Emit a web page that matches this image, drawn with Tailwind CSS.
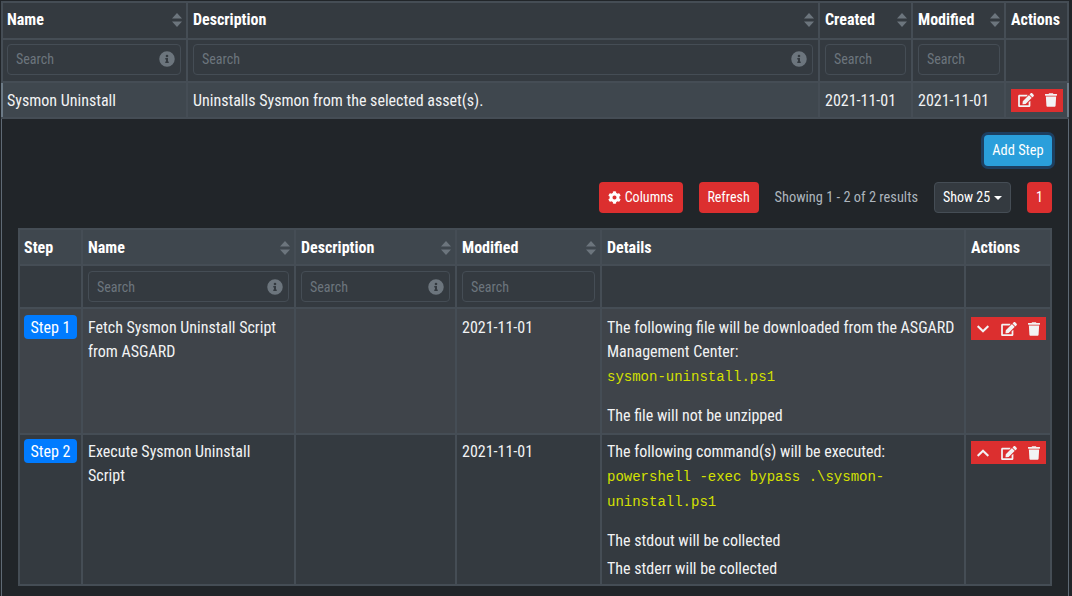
<!DOCTYPE html>
<html>
<head>
<meta charset="utf-8">
<script src="https://cdn.jsdelivr.net/npm/@tailwindcss/browser@4"></script>
</head>
<body class="bg-[#212529] overflow-hidden">
<svg class="hidden">
<symbol id="sort" viewBox="0 0 12 16"><path d="M1 6.500 6 1l5 5.500Z M1 9.500 6 15l5-5.500Z" fill="currentColor"/></symbol>
<symbol id="info" viewBox="0 0 512 512"><path fill="currentColor" d="M256 8a248 248 0 1 0 0 496 248 248 0 0 0 0-496zm0 110a42 42 0 1 1 0 84 42 42 0 0 1 0-84zm56 254c0 7-5 12-12 12h-88c-7 0-12-5-12-12v-24c0-7 5-12 12-12h12v-64h-12c-7 0-12-5-12-12v-24c0-7 5-12 12-12h64c7 0 12 5 12 12v100h12c7 0 12 5 12 12v24z"/></symbol>
<symbol id="edit" viewBox="0 0 576 512"><path fill="currentColor" d="M402.600 83.200l90.200 90.200c3.800 3.800 3.800 10 0 13.800L274.400 405.600l-92.800 10.300c-12.400 1.400-22.900-9.100-21.500-21.500l10.300-92.800L388.800 83.200c3.800-3.800 10-3.800 13.800 0zm162-22.900l-48.800-48.800c-15.200-15.200-39.900-15.200-55.200 0l-35.400 35.400c-3.800 3.800-3.800 10 0 13.800l90.200 90.200c3.800 3.800 10 3.800 13.800 0l35.400-35.400c15.200-15.300 15.200-40 0-55.200zM384 346.200V448H64V128h229.800c3.200 0 6.200-1.300 8.500-3.500l40-40c7.600-7.600 2.200-20.500-8.500-20.500H48C21.500 64 0 85.500 0 112v352c0 26.500 21.500 48 48 48h352c26.500 0 48-21.500 48-48V306.200c0-10.700-12.900-16-20.500-8.500l-40 40c-2.200 2.300-3.500 5.300-3.500 8.500z"/></symbol>
<symbol id="trash" viewBox="0 0 448 512"><path fill="currentColor" d="M432 32H312l-9-19c-4-8-12-13-21-13H166c-9 0-17 5-21 13l-9 19H16C7 32 0 39 0 48v32c0 9 7 16 16 16h416c9 0 16-7 16-16V48c0-9-7-16-16-16zM53 467c2 25 23 45 48 45h246c25 0 46-20 48-45l21-339H32l21 339z"/></symbol>
<symbol id="down" viewBox="0 0 448 512"><path fill="currentColor" d="M207 381 13 187c-9-9-9-24 0-34l23-22c9-10 24-10 34 0l154 153 154-153c10-10 25-10 34 0l23 22c9 10 9 25 0 34L241 381c-9 10-25 10-34 0z"/></symbol>
<symbol id="up" viewBox="0 0 448 512"><path fill="currentColor" d="M241 131l194 194c9 9 9 24 0 34l-23 22c-9 10-24 10-34 0L224 228 70 381c-10 10-25 10-34 0l-23-22c-9-10-9-25 0-34l194-194c9-10 25-10 34 0z"/></symbol>
<symbol id="gear" viewBox="0 0 512 512"><path fill="currentColor" d="m487 316-42-25a190 190 0 0 0 0-70l42-25c5-3 7-9 5-14-11-35-30-67-54-93-4-4-10-5-15-2l-42 24a190 190 0 0 0-61-35V28c0-6-4-10-9-11a222 222 0 0 0-110 0c-5 1-9 5-9 11v48a190 190 0 0 0-61 35L89 87c-5-3-11-2-15 2-24 26-43 58-54 93-2 5 0 11 5 14l42 25a190 190 0 0 0 0 70l-42 25c-5 3-7 9-5 14 11 35 30 67 54 93 4 4 10 5 15 2l42-24a190 190 0 0 0 61 35v48c0 6 4 10 9 11a222 222 0 0 0 110 0c5-1 9-5 9-11v-48a190 190 0 0 0 61-35l42 24c5 3 11 2 15-2 24-26 43-58 54-93 2-5 0-11-5-14zM256 336a80 80 0 1 1 0-160 80 80 0 0 1 0 160z"/></symbol>
</svg>
<div class="w-[1072px] h-[596px] overflow-hidden font-['Roboto',sans-serif] [font-stretch:75%] text-[16px] leading-[24px] text-white">
<div class="px-px pt-px">
<table class="table-fixed border-collapse w-[1068px] bg-[#343a40]">
<colgroup><col class="w-[185px]"><col class="w-[632px]"><col class="w-[93px]"><col class="w-[93px]"><col class="w-[63px]"></colgroup>
<thead>
<tr class="h-[37px]">
<th class="border-2 border-[#454d55] pl-1 pr-[5px] pb-[2px] text-left font-bold"><div class="flex items-center justify-between">Name<svg class="w-3 h-4 text-[#6c757d] mr-[-2px]"><use href="#sort"/></svg></div></th>
<th class="border-2 border-[#454d55] px-[5px] pb-[2px] text-left font-bold"><div class="flex items-center justify-between">Description<svg class="w-3 h-4 text-[#6c757d] mr-[-2px]"><use href="#sort"/></svg></div></th>
<th class="border-2 border-[#454d55] px-[5px] pb-[2px] text-left font-bold"><div class="flex items-center justify-between">Created<svg class="w-3 h-4 text-[#6c757d] mr-[-2px]"><use href="#sort"/></svg></div></th>
<th class="border-2 border-[#454d55] px-[5px] pb-[2px] text-left font-bold"><div class="flex items-center justify-between">Modified<svg class="w-3 h-4 text-[#6c757d] mr-[-2px]"><use href="#sort"/></svg></div></th>
<th class="border-2 border-[#454d55] px-[5px] pb-[2px] text-left font-bold">Actions</th>
</tr>
<tr class="h-[43px]">
<td class="border-2 border-[#454d55] pl-1 pr-[5px] pb-[3px]"><div class="h-[31px] border border-[#454d55] rounded px-2 flex items-center justify-between text-[14px] text-[#6c757d]">Search<svg class="w-4 h-4 mr-[-3px]"><use href="#info"/></svg></div></td>
<td class="border-2 border-[#454d55] px-[5px] pb-[3px]"><div class="h-[31px] border border-[#454d55] rounded px-2 flex items-center justify-between text-[14px] text-[#6c757d]">Search<svg class="w-4 h-4 mr-[-3px]"><use href="#info"/></svg></div></td>
<td class="border-2 border-[#454d55] px-[5px] pb-[3px]"><div class="h-[31px] border border-[#454d55] rounded px-2 flex items-center text-[14px] text-[#6c757d]">Search</div></td>
<td class="border-2 border-[#454d55] px-[5px] pb-[3px]"><div class="h-[31px] w-[82px] border border-[#454d55] rounded px-2 flex items-center text-[14px] text-[#6c757d]">Search</div></td>
<td class="border-2 border-[#454d55]"></td>
</tr>
</thead>
<tbody>
<tr class="h-[36px] bg-[#3f474e] text-[#f2f3f4]">
<td class="border-2 border-[#454d55] border-t-[#6c7a86] border-l-[#6c7a86] pl-1 pt-[2px]">Sysmon Uninstall</td>
<td class="border-2 border-[#454d55] border-t-[#6c7a86] px-[5px] pt-[2px]">Uninstalls Sysmon from the selected asset(s).</td>
<td class="border-2 border-[#454d55] border-t-[#6c7a86] px-[5px] pt-[2px]">2021-11-01</td>
<td class="border-2 border-[#454d55] border-t-[#6c7a86] px-[5px] pt-[2px]">2021-11-01</td>
<td class="border-2 border-[#454d55] border-t-[#6c7a86] border-r-[#6c7a86] px-[5px]"><div class="w-[52px] h-[23px] bg-[#dc2f2f] flex items-center pl-[7px] gap-[11px]"><svg class="w-4 h-[14px]"><use href="#edit"/></svg><svg class="w-3 h-[14px]"><use href="#trash"/></svg></div></td>
</tr>
</tbody>
</table>
</div>
<div class="border-x border-[#5f6a75] w-[1068px] ml-px px-4 h-[477px]">
<div class="flex justify-end pt-4 pb-4">
<button class="h-[31px] w-[68px] pt-[2px] bg-[#2a9fdb] rounded text-[14.4px] leading-none text-white ring-[3px] ring-[#1d3f60]">Add Step</button>
</div>
<div class="flex justify-end items-center h-[31px] text-[14px]">
<button class="h-[31px] w-[84px] pb-[2px] bg-[#dc2f2f] rounded flex items-center justify-center gap-1"><svg class="w-[13px] h-[13px] mt-[2px]"><use href="#gear"/></svg>Columns</button>
<button class="h-[31px] w-[60px] pb-[2px] ml-4 bg-[#dc2f2f] rounded">Refresh</button>
<span class="ml-4 text-[14.4px] text-[#adb5bd]">Showing 1 - 2 of 2 results</span>
<button class="h-[31px] w-[77px] pb-[2px] ml-4 bg-[#343a40] border border-[#454d55] rounded flex items-center justify-center gap-1">Show 25<span class="border-x-4 border-x-transparent border-t-4 border-t-white mt-[2px]"></span></button>
<button class="h-[31px] w-[25px] pb-[2px] ml-4 bg-[#dc2f2f] rounded">1</button>
</div>
<table class="table-fixed border-collapse w-[1034px] mt-[15px] bg-[#343a40]">
<colgroup><col class="w-[63px]"><col class="w-[213px]"><col class="w-[161px]"><col class="w-[145px]"><col class="w-[364px]"><col class="w-[86px]"></colgroup>
<thead>
<tr class="h-[36px] bg-[#3f474e]">
<th class="border-2 border-[#454d55] pl-1 pr-[5px] pt-[2px] text-left font-bold">Step</th>
<th class="border-2 border-[#454d55] px-[5px] pt-[2px] text-left font-bold"><div class="flex items-center justify-between">Name<svg class="w-3 h-4 text-[#6c757d] mr-[-2px]"><use href="#sort"/></svg></div></th>
<th class="border-2 border-[#454d55] px-[5px] pt-[2px] text-left font-bold"><div class="flex items-center justify-between">Description<svg class="w-3 h-4 text-[#6c757d] mr-[-2px]"><use href="#sort"/></svg></div></th>
<th class="border-2 border-[#454d55] px-[5px] pt-[2px] text-left font-bold"><div class="flex items-center justify-between">Modified<svg class="w-3 h-4 text-[#6c757d] mr-[-2px]"><use href="#sort"/></svg></div></th>
<th class="border-2 border-[#454d55] px-[5px] pt-[2px] text-left font-bold">Details</th>
<th class="border-2 border-[#454d55] px-[5px] pt-[2px] text-left font-bold">Actions</th>
</tr>
<tr class="h-[43px]">
<td class="border-2 border-[#454d55]"></td>
<td class="border-2 border-[#454d55] px-[5px]"><div class="h-[31px] border border-[#454d55] rounded px-2 flex items-center justify-between text-[14px] text-[#6c757d]">Search<svg class="w-4 h-4 mr-[-3px]"><use href="#info"/></svg></div></td>
<td class="border-2 border-[#454d55] px-[5px]"><div class="h-[31px] border border-[#454d55] rounded px-2 flex items-center justify-between text-[14px] text-[#6c757d]">Search<svg class="w-4 h-4 mr-[-3px]"><use href="#info"/></svg></div></td>
<td class="border-2 border-[#454d55] px-[5px]"><div class="h-[31px] border border-[#454d55] rounded px-2 flex items-center text-[14px] text-[#6c757d]">Search</div></td>
<td class="border-2 border-[#454d55]"></td>
<td class="border-2 border-[#454d55]"></td>
</tr>
</thead>
<tbody>
<tr class="h-[126px] bg-[#3f444a] align-top text-[#f2f3f4]">
<td class="border-2 border-[#454d55] pl-1 pr-[5px] pt-[6px]"><span class="block bg-[#007bff] text-white rounded-[4px] w-[53px] h-[24px] leading-[26px] text-center">Step 1</span></td>
<td class="border-2 border-[#454d55] px-[5px] pt-[7px]">Fetch Sysmon Uninstall Script from ASGARD</td>
<td class="border-2 border-[#454d55]"></td>
<td class="border-2 border-[#454d55] px-[5px] pt-[7px]">2021-11-01</td>
<td class="border-2 border-[#454d55] px-[5px] pt-[7px]">The following file will be downloaded from the ASGARD Management Center:<div class="mt-px font-['Liberation_Mono',monospace] [font-stretch:100%] text-[14px] leading-[25px] text-[#d4e000]">sysmon-uninstall.ps1</div><div class="mt-[14px]">The file will not be unzipped</div></td>
<td class="border-2 border-[#454d55] px-[5px] pt-[8px]"><div class="w-[75px] h-[23px] bg-[#dc2f2f] flex items-center pl-[6px] gap-[12px]"><svg class="w-3 h-[14px]"><use href="#down"/></svg><svg class="w-4 h-[14px]"><use href="#edit"/></svg><svg class="w-3 h-[14px] ml-[-1px]"><use href="#trash"/></svg></div></td>
</tr>
<tr class="h-[151px] align-top text-[#f2f3f4]">
<td class="border-2 border-[#454d55] pl-1 pr-[5px] pt-[4px]"><span class="block bg-[#007bff] text-white rounded-[4px] w-[53px] h-[24px] leading-[26px] text-center">Step 2</span></td>
<td class="border-2 border-[#454d55] px-[5px] pt-[5px]">Execute Sysmon Uninstall Script</td>
<td class="border-2 border-[#454d55]"></td>
<td class="border-2 border-[#454d55] px-[5px] pt-[5px]">2021-11-01</td>
<td class="border-2 border-[#454d55] px-[5px] pt-[5px]">The following command(s) will be executed:<div class="mt-px font-['Liberation_Mono',monospace] [font-stretch:100%] text-[14px] leading-[25px] text-[#d4e000]">powershell -exec bypass .\sysmon-uninstall.ps1</div><div class="mt-[14px]">The stdout will be collected</div><div class="mt-[4px]">The stderr will be collected</div></td>
<td class="border-2 border-[#454d55] px-[5px] pt-[6px]"><div class="w-[75px] h-[23px] bg-[#dc2f2f] flex items-center pl-[6px] gap-[12px]"><svg class="w-3 h-[14px]"><use href="#up"/></svg><svg class="w-4 h-[14px]"><use href="#edit"/></svg><svg class="w-3 h-[14px] ml-[-1px]"><use href="#trash"/></svg></div></td>
</tr>
</tbody>
</table>
</div>
</div>
</body>
</html>
